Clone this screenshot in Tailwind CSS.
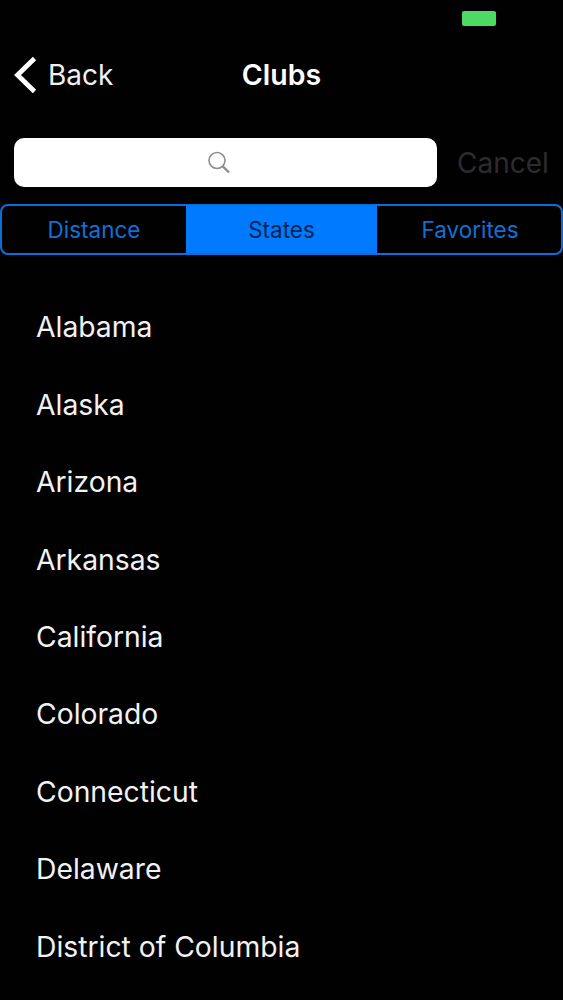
<!DOCTYPE html>
<html lang="en">
<head>
    <meta charset="utf-8">
    <title>Clubs</title>
    <script src="https://cdn.jsdelivr.net/npm/@tailwindcss/browser@4"></script>
</head>
<body class="bg-black">
    <div class="w-[563px] h-[1000px] overflow-hidden bg-[#020102] font-['Inter','Liberation_Sans',sans-serif]">
        <!-- Status bar -->
        <div class="h-[26px] pt-[11px] pr-[67px] flex justify-end">
            <div class="w-[34px] h-[15px] rounded-[2px] bg-[#4cd964]"></div>
        </div>

        <!-- Nav bar -->
        <div class="relative h-[98px]">
            <div class="absolute left-[14px] top-[30px] flex items-center gap-[10px]">
                <svg width="24" height="38" viewBox="0 0 24 38" fill="none" class="text-white">
                    <path d="M20.5 2.5 L3.5 19 L20.5 35.5" stroke="currentColor" stroke-width="4.8" stroke-linecap="butt"/>
                </svg>
                <span class="text-[28px] leading-none text-[#f0f0f0]">Back</span>
            </div>
            <h1 class="pt-[35px] text-center text-[28.5px] font-semibold leading-none text-white">Clubs</h1>
        </div>

        <!-- Search -->
        <div class="mt-[14px] pl-[14px] flex items-center">
            <div class="w-[423px] h-[49px] rounded-[10px] bg-white flex items-center justify-center">
                <svg width="26" height="26" viewBox="0 0 26 26" fill="none" stroke="#8e8e8e" class="mr-[14px]">
                    <circle cx="11" cy="10.5" r="8" stroke-width="1.6"/>
                    <path d="M16.8 16.3 L23 22.5" stroke-width="2.4"/>
                </svg>
            </div>
            <span class="ml-[20px] text-[28px] leading-none text-[#2c2c2e]">Cancel</span>
        </div>

        <!-- Segmented control -->
        <div class="mt-[17px] h-[51px] w-[563px] rounded-[8px] border-2 border-[#0a6fdc] grid grid-cols-[184px_191px_1fr] overflow-hidden text-[22.5px]">
            <div class="flex items-center justify-center text-[#1170d6]">Distance</div>
            <div class="flex items-center justify-center bg-[#007aff] text-[#04264f]">States</div>
            <div class="flex items-center justify-center pl-[2px] text-[#1170d6]">Favorites</div>
        </div>

        <!-- States list -->
        <ul class="mt-[34px] pl-[36px] text-[28.3px] text-[#f2f2f2]">
            <li class="h-[77.4px] flex items-center">Alabama</li>
            <li class="h-[77.4px] flex items-center">Alaska</li>
            <li class="h-[77.4px] flex items-center">Arizona</li>
            <li class="h-[77.4px] flex items-center">Arkansas</li>
            <li class="h-[77.4px] flex items-center">California</li>
            <li class="h-[77.4px] flex items-center">Colorado</li>
            <li class="h-[77.4px] flex items-center">Connecticut</li>
            <li class="h-[77.4px] flex items-center">Delaware</li>
            <li class="h-[77.4px] flex items-center">District of Columbia</li>
        </ul>
    </div>
</body>
</html>
